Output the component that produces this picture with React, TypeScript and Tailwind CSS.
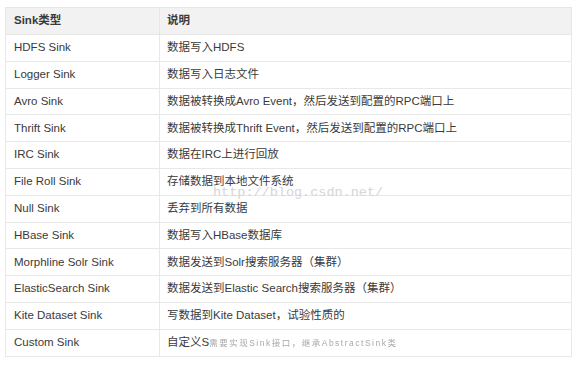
const rows: [string, string][] = [
  ["HDFS Sink", "数据写入HDFS"],
  ["Logger Sink", "数据写入日志文件"],
  ["Avro Sink", "数据被转换成Avro Event，然后发送到配置的RPC端口上"],
  ["Thrift Sink", "数据被转换成Thrift Event，然后发送到配置的RPC端口上"],
  ["IRC Sink", "数据在IRC上进行回放"],
  ["File Roll Sink", "存储数据到本地文件系统"],
  ["Null Sink", "丢弃到所有数据"],
  ["HBase Sink", "数据写入HBase数据库"],
  ["Morphline Solr Sink", "数据发送到Solr搜索服务器（集群）"],
  ["ElasticSearch Sink", "数据发送到Elastic Search搜索服务器（集群）"],
  ["Kite Dataset Sink", "写数据到Kite Dataset，试验性质的"],
]

export default function App() {
  return (
    <div className="w-[583px] h-[366px] bg-white pt-[7px] pl-[5px] relative font-['Liberation_Sans','Noto_Sans_CJK_SC',sans-serif] text-[11.5px] text-[#3a3a3a]">
      <table className="w-[567px] border-collapse table-fixed">
        <colgroup>
          <col className="w-[154px]" />
          <col />
        </colgroup>
        <thead>
          <tr className="h-[27px] bg-[#f2f2f2]">
            <th className="border border-[#e6e6e6] text-left font-bold px-[8px]">Sink类型</th>
            <th className="border border-[#e6e6e6] text-left font-bold px-[7px]">说明</th>
          </tr>
        </thead>
        <tbody>
          {rows.map(([name, desc]) => (
            <tr key={name} className="h-[26.8px]">
              <td className="border border-[#e8e8e8] px-[8px]">{name}</td>
              <td className="border border-[#e8e8e8] px-[7px]">{desc}</td>
            </tr>
          ))}
          <tr className="h-[26.8px]">
            <td className="border border-[#e8e8e8] px-[8px]">Custom Sink</td>
            <td className="border border-[#e8e8e8] px-[7px]">
              <span>自定义S</span>
              <span className="text-[8.5px] text-[#a8a8a8] tracking-[1.5px] blur-[0.5px]">需要实现Sink接口，继承AbstractSink类</span>
            </td>
          </tr>
        </tbody>
      </table>
      <div className="absolute left-[213px] top-[183px] font-['Liberation_Mono',monospace] text-[13.5px] text-[#d6d6d6] pointer-events-none">
        http://blog.csdn.net/
      </div>
    </div>
  )
}
